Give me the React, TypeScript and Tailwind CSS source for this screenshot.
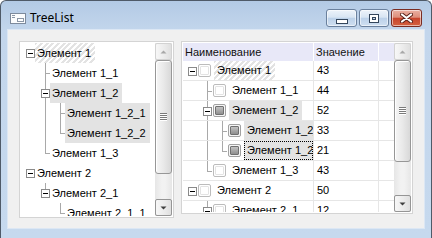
import React from "react";

type Node = {
  label: string;
  level: number;
  kids?: boolean;
  last?: boolean;
  anc?: boolean[];
  look?: "hatch" | "gray";
  focus?: boolean;
  mixed?: boolean;
  value?: string;
};

const leftRows: Node[] = [
  { label: "Элемент 1", level: 0, kids: true, look: "hatch" },
  { label: "Элемент 1_1", level: 1 },
  { label: "Элемент 1_2", level: 1, kids: true, look: "gray" },
  { label: "Элемент 1_2_1", level: 2, anc: [false, true], look: "gray" },
  { label: "Элемент 1_2_2", level: 2, anc: [false, true], last: true, look: "gray" },
  { label: "Элемент 1_3", level: 1, last: true },
  { label: "Элемент 2", level: 0, kids: true },
  { label: "Элемент 2_1", level: 1, kids: true, last: true },
  { label: "Элемент 2_1_1", level: 2, anc: [false, false], last: true },
];

const rightRows: Node[] = [
  { label: "Элемент 1", level: 0, kids: true, look: "hatch", value: "43" },
  { label: "Элемент 1_1", level: 1, value: "44" },
  { label: "Элемент 1_2", level: 1, kids: true, look: "gray", mixed: true, value: "52" },
  { label: "Элемент 1_2_1", level: 2, anc: [false, true], look: "gray", mixed: true, value: "33" },
  { label: "Элемент 1_2_2", level: 2, anc: [false, true], last: true, look: "gray", mixed: true, focus: true, value: "21" },
  { label: "Элемент 1_3", level: 1, last: true, value: "43" },
  { label: "Элемент 2", level: 0, kids: true, value: "50" },
  { label: "Элемент 2_1", level: 1, kids: true, last: true, value: "12" },
];

const LINE = "#a9a9a9";

function Guides({ n, h }: { n: Node; h: number }) {
  const L = n.level;
  const w = 14 + 15 * L;
  const c = (l: number) => 9.5 + 15 * l;
  return (
    <svg width={w} height={h} className="shrink-0 block" shapeRendering="crispEdges">
      {n.anc?.map((on, a) =>
        on && a >= 1 ? <line key={a} x1={c(a)} x2={c(a)} y1={0} y2={h} stroke={LINE} /> : null
      )}
      {L >= 1 && <line x1={c(L)} x2={c(L)} y1={0} y2={n.last ? 10.5 : h} stroke={LINE} />}
      {L >= 1 && !n.kids && <line x1={c(L)} x2={w} y1={10.5} y2={10.5} stroke={LINE} />}
      {n.kids && (
        <>
          <rect x={5.5 + 15 * L} y={6.5} width={8} height={8} fill="#ffffff" stroke="#8a8a8a" />
          <line x1={7 + 15 * L} x2={12 + 15 * L} y1={10.5} y2={10.5} stroke="#000000" />
        </>
      )}
    </svg>
  );
}

function lookClass(n: Node) {
  if (n.look === "hatch")
    return "bg-[repeating-linear-gradient(135deg,#e3e3e3_0px,#e3e3e3_2px,#ffffff_2px,#ffffff_4px)]";
  if (n.look === "gray") return "bg-[#e3e3e3]";
  return "";
}

function Check({ mixed }: { mixed?: boolean }) {
  return mixed ? (
    <div className="w-[13px] h-[13px] rounded-[2px] border border-[#a2a2a2] bg-[#f6f6f6] p-[1px] shrink-0">
      <div className="w-full h-full rounded-[1px] border border-[#707070] bg-[linear-gradient(#c2c2c2,#8f8f8f)]" />
    </div>
  ) : (
    <div className="w-[13px] h-[13px] rounded-[2px] border border-[#bcbcbc] bg-white p-[1px] shrink-0">
      <div className="w-full h-full rounded-[1px] border border-[#e3e3e3]" />
    </div>
  );
}

function Arrow({ up, enabled }: { up?: boolean; enabled?: boolean }) {
  return (
    <div
      className={`h-[17px] w-[17px] shrink-0 rounded-[2px] border flex items-center justify-center bg-[linear-gradient(90deg,#f7f7f7,#ebebeb_55%,#dfdfdf)] ${
        enabled ? "border-[#959595]" : "border-[#d2d2d2]"
      }`}
    >
      <svg width="7" height="4" className="block">
        {up ? (
          <polygon points="0.5,3.5 3.5,0.5 6.5,3.5" fill={enabled ? "#3f3f3f" : "#a8a8a8"} />
        ) : (
          <polygon points="0.5,0.5 3.5,3.5 6.5,0.5" fill={enabled ? "#3f3f3f" : "#a8a8a8"} />
        )}
      </svg>
    </div>
  );
}

function Grip() {
  return (
    <svg width="7" height="8" className="block" shapeRendering="crispEdges">
      {[0, 2, 4, 6].map((y) => (
        <g key={y}>
          <line x1={0} x2={7} y1={y + 0.5} y2={y + 0.5} stroke="#7a7a7a" />
          <line x1={0} x2={7} y1={y + 1.5} y2={y + 1.5} stroke="#ffffff" />
        </g>
      ))}
    </svg>
  );
}

function ScrollBar({ thumbClass }: { thumbClass: string }) {
  return (
    <div className="w-[17px] shrink-0 flex flex-col bg-[linear-gradient(90deg,#e6e6e6,#f2f2f2_40%,#f2f2f2_60%,#e6e6e6)]">
      <Arrow up />
      <div
        className={`${thumbClass} w-[17px] shrink-0 rounded-[3px] border border-[#979797] bg-[linear-gradient(90deg,#f6f6f6,#e9e9e9_50%,#d8d8d8)] shadow-[inset_1px_1px_0_#ffffff] flex items-center justify-center`}
      >
        <Grip />
      </div>
      <div className="flex-1" />
      <Arrow enabled />
    </div>
  );
}

function WinIcon() {
  return (
    <svg width="16" height="11" className="block" shapeRendering="crispEdges">
      <rect x="0.5" y="0.5" width="15" height="10" fill="#fbfcfd" stroke="#7d8a9c" />
      <line x1="2" x2="5" y1="2.5" y2="2.5" stroke="#8a96a6" />
      <line x1="2" x2="5" y1="4.5" y2="4.5" stroke="#8a96a6" />
      <rect x="7.5" y="5.5" width="6" height="3" rx="1" fill="#ffffff" stroke="#8a96a6" />
    </svg>
  );
}

function CapButton({ kind }: { kind: "min" | "max" | "close" }) {
  const base =
    kind === "close"
      ? "w-[31px] border-[#7a2c22] bg-[linear-gradient(#eab0a2,#de8f7c_45%,#c8462e_52%,#d4613f)]"
      : "border-[#6a809d] bg-[linear-gradient(#edf3fa,#d8e5f3_45%,#bcd1e9_52%,#cfdff1)]";
  const w = kind === "min" ? "w-[31px]" : kind === "max" ? "w-[30px]" : "";
  return (
    <div
      className={`${base} ${w} h-[18px] rounded-[3px] border shadow-[inset_0_0_0_1px_rgba(255,255,255,0.55)] flex items-center justify-center`}
    >
      {kind === "min" && (
        <svg width="12" height="5" className="block mt-[6px]" shapeRendering="crispEdges">
          <rect x="0.5" y="0.5" width="11" height="4" fill="#ffffff" stroke="#34465c" />
        </svg>
      )}
      {kind === "max" && (
        <svg width="10" height="9" className="block" shapeRendering="crispEdges">
          <rect x="0.5" y="0.5" width="9" height="8" fill="#ffffff" stroke="#34465c" />
          <rect x="3.5" y="3.5" width="3" height="2" fill="#c9d8ea" stroke="#34465c" />
        </svg>
      )}
      {kind === "close" && (
        <svg width="13" height="10" className="block">
          <path d="M2 1.5 L11 8.5 M11 1.5 L2 8.5" stroke="#5a2118" strokeWidth="4" strokeLinecap="round" />
          <path d="M2 1.5 L11 8.5 M11 1.5 L2 8.5" stroke="#ffffff" strokeWidth="2.2" strokeLinecap="round" />
        </svg>
      )}
    </div>
  );
}

export default function App() {
  return (
    <div className="w-[432px] h-[238px] overflow-hidden bg-white font-['Liberation_Sans',Arial,sans-serif] text-[11px] leading-none text-black">
      <div className="w-[432px] h-[238px] flex flex-col rounded-t-[6px] border-x border-t border-[#4f5a68] bg-[linear-gradient(180deg,#b3cae5_0px,#c3d6ec_30px,#c6d9ee_100%)] px-[7px] pb-[10px]">
        {/* title bar */}
        <div className="h-[29px] shrink-0 flex items-start">
          <div className="ml-[2px] mt-[12px]">
            <WinIcon />
          </div>
          <div className="ml-[4px] mt-[10px] text-[12px] leading-[14px] font-['Noto_Sans',sans-serif] text-black">
            TreeList
          </div>
          <div className="flex-1" />
          <div className="mt-[8px] mr-[2px] flex gap-[2px]">
            <CapButton kind="min" />
            <CapButton kind="max" />
            <CapButton kind="close" />
          </div>
        </div>

        {/* client */}
        <div className="flex-1 bg-[#f0f0f0] shadow-[0_0_0_1px_#dce7f4] flex items-start gap-[7px] pl-[11px] pt-[11px]">
          {/* left tree */}
          <div className="w-[155px] h-[177px] shrink-0 border border-[#d4d4d4] bg-white p-[1px] flex">
            <div className="flex-1 min-w-0 flex flex-col overflow-hidden">
              {leftRows.map((n, i) => (
                <div key={i} className="h-[20px] shrink-0 flex items-stretch">
                  <Guides n={n} h={20} />
                  <div className={`pl-[2px] pr-[4px] flex items-center whitespace-nowrap ${lookClass(n)}`}>
                    {n.label}
                  </div>
                </div>
              ))}
            </div>
            <ScrollBar thumbClass="h-[114px]" />
          </div>

          {/* right tree list */}
          <div className="w-[232px] h-[173px] shrink-0 border border-[#d4d4d4] bg-white p-[1px] flex">
            <div className="flex-1 min-w-0 flex flex-col overflow-hidden">
              <div className="h-[18px] shrink-0 flex bg-[#e8e8f8] text-[#111111]">
                <div className="w-[131px] shrink-0 border-r border-white pl-[2px] flex items-center">Наименование</div>
                <div className="w-[65px] shrink-0 border-r border-white pl-[2px] flex items-center">Значение</div>
                <div className="flex-1" />
              </div>
              {rightRows.map((n, i) => (
                <div key={i} className="h-[20px] shrink-0 flex border-b border-[#e6e6e6]">
                  <div className="w-[131px] shrink-0 border-r border-[#e6e6e6] flex items-stretch overflow-hidden">
                    <Guides n={n} h={19} />
                    <div className="ml-[1px] flex items-center shrink-0">
                      <Check mixed={n.mixed} />
                    </div>
                    <div
                      className={`ml-[3px] ${n.focus ? "border border-dotted border-black pl-[2px]" : "pl-[3px]"} pr-[4px] min-w-0 overflow-hidden flex items-center whitespace-nowrap ${lookClass(n)}`}
                    >
                      {n.label}
                    </div>
                  </div>
                  <div className="w-[65px] shrink-0 border-r border-[#e6e6e6] pl-[3px] flex items-center">{n.value}</div>
                  <div className="flex-1" />
                </div>
              ))}
            </div>
            <ScrollBar thumbClass="h-[102px]" />
          </div>
        </div>
      </div>
    </div>
  );
}
